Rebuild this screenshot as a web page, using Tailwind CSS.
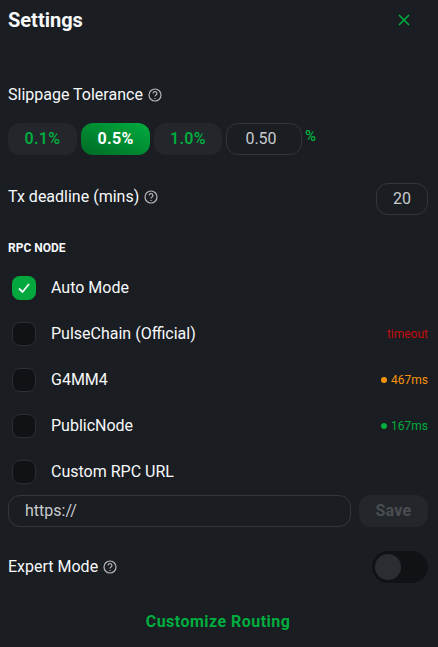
<!DOCTYPE html>
<html lang="en">
  <head>
    <meta charset="UTF-8" />
    <meta name="viewport" content="width=device-width, initial-scale=1.0" />
    <title>Settings</title>
    <script src="https://cdn.jsdelivr.net/npm/@tailwindcss/browser@4"></script>
  </head>
  <body class="bg-[#1a1d21] font-[Roboto,sans-serif] text-[#f7f9fb] h-[647px] w-[438px] overflow-hidden">
    <div class="pl-2 pr-[10px]">
      <!-- header -->
      <div class="flex items-center justify-between h-10">
        <h1 class="text-xl font-bold">Settings</h1>
        <button class="w-12 h-10 flex items-center justify-center text-[#00ad3f]">
          <svg width="12" height="12" viewBox="0 0 12 12" fill="none" stroke="currentColor" stroke-width="1.6"><path d="M1 1l10 10M11 1L1 11" /></svg>
        </button>
      </div>

      <!-- slippage -->
      <div class="mt-[43px] flex items-center gap-[5px] h-6">
        <span class="text-base">Slippage Tolerance</span>
        <svg class="text-[#b4b6b8]" width="14" height="14" viewBox="0 0 14 14" fill="none" stroke="currentColor" stroke-width="1.2"><circle cx="7" cy="7" r="6" /><path d="M5.1 5.5a1.9 1.9 0 1 1 2.9 1.6c-.7.4-1 .8-1 1.5" /><path d="M7 10v1" /></svg>
      </div>
      <div class="mt-4 flex gap-1">
        <button class="w-[69px] h-8 rounded-xl bg-[#23262b] text-[#00ad3f] font-semibold tracking-[0.3px] text-base">0.1%</button>
        <button class="w-[69px] h-8 rounded-xl bg-gradient-to-tr from-[#006b26] to-[#00ad3f] text-white font-bold tracking-[0.3px] text-base">0.5%</button>
        <button class="w-[68px] h-8 rounded-xl bg-[#23262b] text-[#00ad3f] font-semibold tracking-[0.3px] text-base">1.0%</button>
        <div class="w-[76px] h-8 rounded-xl border border-[#33363a] text-[#c8cbce] text-base flex items-center justify-center pr-1.5">0.50</div>
        <span class="-ml-[1px] text-[#00ad3f] font-semibold text-[15px] leading-[26px]">%</span>
      </div>

      <!-- deadline -->
      <div class="mt-7 flex items-center justify-between h-8">
        <div class="flex items-center gap-[5px] -mt-[4px]">
          <span class="text-base">Tx deadline (mins)</span>
          <svg class="text-[#b4b6b8]" width="14" height="14" viewBox="0 0 14 14" fill="none" stroke="currentColor" stroke-width="1.2"><circle cx="7" cy="7" r="6" /><path d="M5.1 5.5a1.9 1.9 0 1 1 2.9 1.6c-.7.4-1 .8-1 1.5" /><path d="M7 10v1" /></svg>
        </div>
        <div class="w-[52px] h-8 rounded-xl border border-[#33363a] text-[#c8cbce] text-base flex items-center justify-center">20</div>
      </div>

      <!-- rpc nodes -->
      <div class="mt-[25px] text-xs leading-4 font-bold">RPC NODE</div>
      <div class="mt-[9px]">
        <div class="h-[46px] flex items-center pl-1">
          <span class="w-6 h-6 rounded-lg bg-[#03a93f] flex items-center justify-center">
            <svg width="14" height="12" viewBox="0 0 14 12" fill="none" stroke="#f4f6f8" stroke-width="1.8"><path d="M2 6.5l3.5 3.5L12 2" /></svg>
          </span>
          <span class="ml-[15px] text-base">Auto Mode</span>
        </div>
        <div class="h-[46px] flex items-center pl-1">
          <span class="w-6 h-6 rounded-lg bg-[#101316] border border-[#2b2e32]"></span>
          <span class="ml-[15px] text-base">PulseChain (Official)</span>
          <span class="ml-auto text-xs text-[#c40c0c]">timeout</span>
        </div>
        <div class="h-[46px] flex items-center pl-1">
          <span class="w-6 h-6 rounded-lg bg-[#101316] border border-[#2b2e32]"></span>
          <span class="ml-[15px] text-base">G4MM4</span>
          <span class="ml-auto text-xs text-[#f7930e] flex items-center gap-[4px]"><span class="w-[6px] h-[6px] rounded-full bg-[#f7930e]"></span>467ms</span>
        </div>
        <div class="h-[46px] flex items-center pl-1">
          <span class="w-6 h-6 rounded-lg bg-[#101316] border border-[#2b2e32]"></span>
          <span class="ml-[15px] text-base">PublicNode</span>
          <span class="ml-auto text-xs text-[#00ad3f] flex items-center gap-[4px]"><span class="w-[6px] h-[6px] rounded-full bg-[#00ad3f]"></span>167ms</span>
        </div>
        <div class="h-[46px] flex items-center pl-1">
          <span class="w-6 h-6 rounded-lg bg-[#101316] border border-[#2b2e32]"></span>
          <span class="ml-[15px] text-base">Custom RPC URL</span>
        </div>
      </div>
      <div class="flex gap-2">
        <div class="w-[343px] h-8 rounded-xl border border-[#33363a] text-[#c8cbce] text-base flex items-center pl-4">https://</div>
        <button class="w-[69px] h-8 rounded-xl bg-[#23262b] text-[#4a4d50] font-bold tracking-[0.3px] text-base">Save</button>
      </div>

      <!-- expert mode -->
      <div class="mt-6 flex items-center justify-between h-8">
        <div class="flex items-center gap-[5px]">
          <span class="text-base">Expert Mode</span>
          <svg class="text-[#b4b6b8]" width="14" height="14" viewBox="0 0 14 14" fill="none" stroke="currentColor" stroke-width="1.2"><circle cx="7" cy="7" r="6" /><path d="M5.1 5.5a1.9 1.9 0 1 1 2.9 1.6c-.7.4-1 .8-1 1.5" /><path d="M7 10v1" /></svg>
        </div>
        <div class="w-14 h-8 rounded-full bg-[#101316] flex items-center pl-[3px]">
          <span class="w-[26px] h-[26px] rounded-full bg-[#2a2d32]"></span>
        </div>
      </div>

      <div class="mt-[27px] text-center text-base leading-6 font-bold tracking-[0.47px] text-[#00ad3f]">Customize Routing</div>
    </div>
  </body>
</html>
